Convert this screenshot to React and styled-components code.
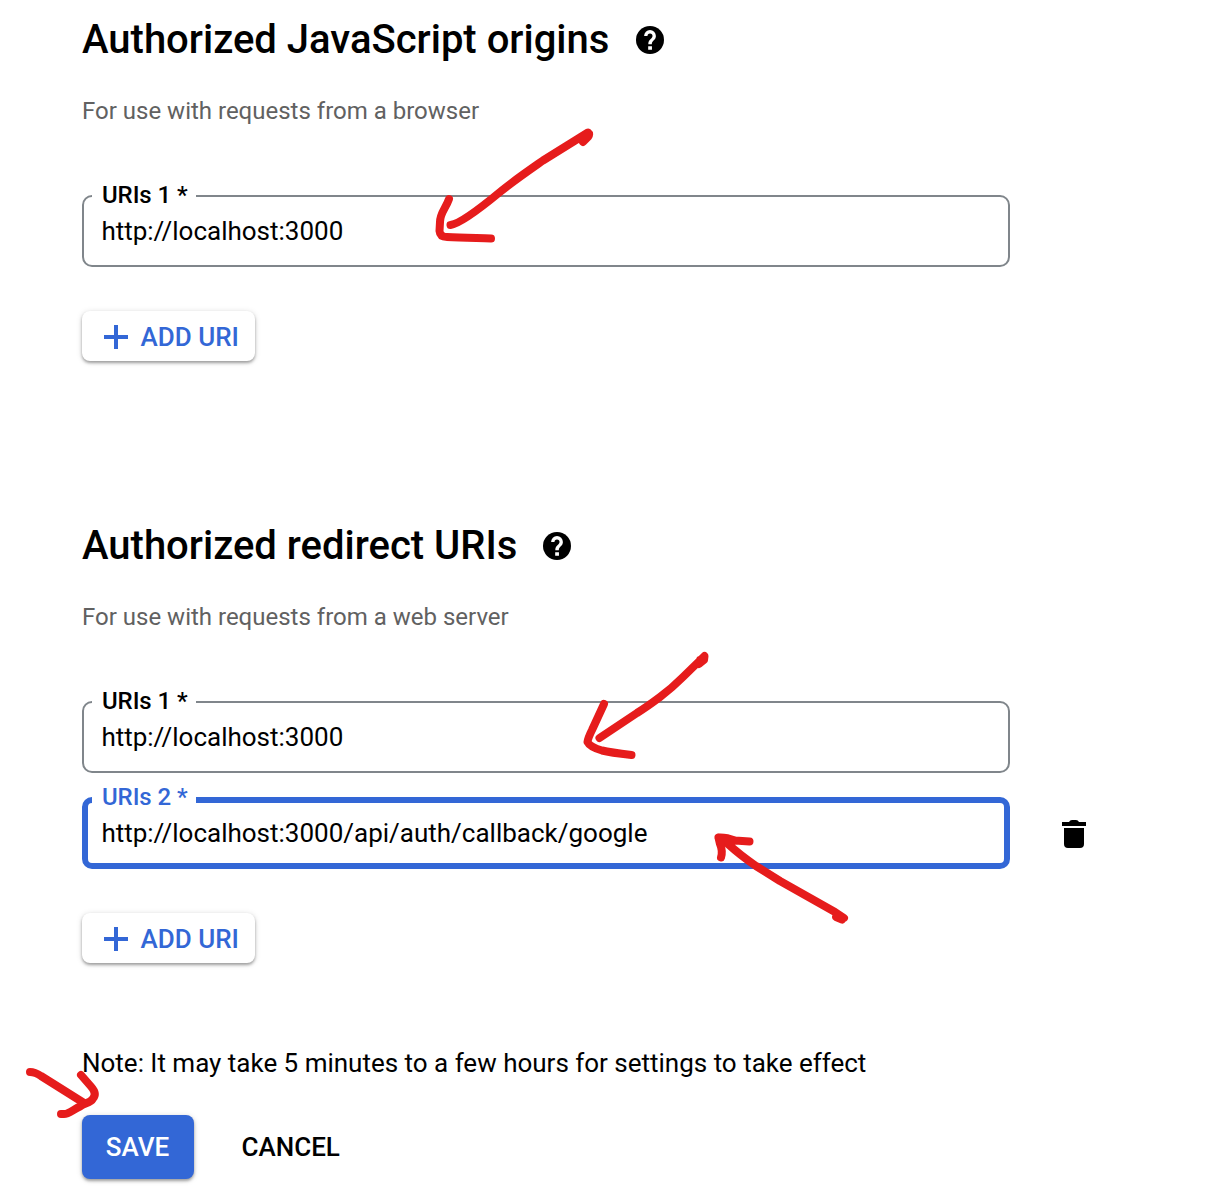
import React from "react";
import styled, { createGlobalStyle } from "styled-components";

const GlobalStyle = createGlobalStyle`
  * { box-sizing: border-box; }
  body {
    margin: 0;
    background: #fff;
    color: #000;
    font-family: Roboto, "Liberation Sans", sans-serif;
  }
`;

const Page = styled.main`
  position: relative;
  width: 1206px;
  height: 1204px;
  padding: 15px 0 0 82px;
  overflow: hidden;
`;

const Section = styled.section`
  display: flex;
  flex-direction: column;
  align-items: flex-start;
  height: ${(p) => p.$height}px;
`;

const HeadingRow = styled.div`
  display: flex;
  align-items: center;
  gap: ${(p) => p.$gap}px;
  height: 50px;
`;

const Heading = styled.h2`
  margin: 0;
  font-size: 40px;
  font-weight: 500;
  line-height: 48px;
  letter-spacing: 0;
  white-space: nowrap;
`;

const Hint = styled.p`
  margin: 30px 0 0;
  font-size: 24px;
  line-height: 32px;
  color: #616161;
  white-space: nowrap;
`;

const Fields = styled.div`
  display: flex;
  flex-direction: column;
  gap: 24px;
  margin-top: 68px;
`;

const FieldRow = styled.div`
  display: flex;
  align-items: center;
  gap: 52px;
  height: 72px;
`;

const FieldSlot = styled.div`
  display: flex;
  align-items: flex-end;
  width: 928px;
  height: 72px;
`;

const FieldBox = styled.fieldset`
  flex: none;
  width: 100%;
  height: ${(p) => (p.$focused ? 81 : 83)}px;
  margin: 0;
  padding: 0 ${(p) => (p.$focused ? 4 : 8)}px;
  border: ${(p) => (p.$focused ? "6px solid #3367d6" : "2px solid #80868b")};
  border-radius: 10px;
`;

const FieldLabel = styled.legend`
  width: 104px;
  height: 24px;
  padding: 0 0 0 10px;
  font-size: 24px;
  font-weight: 500;
  letter-spacing: -0.08px;
  line-height: ${(p) => (p.$focused ? 18 : 22)}px;
  color: ${(p) => (p.$focused ? "#3367d6" : "#000")};
  white-space: nowrap;
`;

const FieldValue = styled.div`
  padding: ${(p) => (p.$focused ? 6 : 8)}px 0 0 9.4px;
  font-size: 26px;
  line-height: 30px;
  white-space: nowrap;
`;

const IconButton = styled.button`
  display: flex;
  padding: 2px 0 0;
  border: 0;
  background: none;
`;

const AddButton = styled.button`
  display: flex;
  align-items: center;
  gap: 12.5px;
  width: 173px;
  height: 50px;
  margin-top: 44px;
  padding: 2px 0 0 22px;
  border: 0;
  border-radius: 8px;
  background: #fff;
  box-shadow: 0 2px 3px rgba(0, 0, 0, 0.32), 0 1px 6px rgba(0, 0, 0, 0.14);
  color: #3367d6;
  font: 500 26px/30px Roboto, sans-serif;
  white-space: nowrap;
`;

const Note = styled.p`
  margin: 0;
  font-size: 26px;
  line-height: 30px;
  letter-spacing: -0.008px;
  white-space: nowrap;
`;

const Actions = styled.div`
  display: flex;
  gap: 47.5px;
  margin-top: 37px;
`;

const ActionButton = styled.button`
  width: ${(p) => (p.$primary ? "112px" : "auto")};
  height: 64px;
  padding: 0 ${(p) => (p.$primary ? "1px" : "0")} 0 0;
  border: 0;
  border-radius: 8px;
  background: ${(p) => (p.$primary ? "#3367d6" : "transparent")};
  box-shadow: ${(p) =>
    p.$primary ? "0 2px 3px rgba(0, 0, 0, 0.32), 0 1px 6px rgba(0, 0, 0, 0.14)" : "none"};
  color: ${(p) => (p.$primary ? "#fff" : "#000")};
  font: 500 26px/30px Roboto, sans-serif;
  white-space: nowrap;
`;

const Markup = styled.svg`
  position: absolute;
  inset: 0;
  pointer-events: none;
`;

const HelpIcon = () => (
  <svg width="28" height="28" viewBox="2 2 20 20" aria-hidden="true">
    <circle cx="12" cy="12" r="10" fill="#000" />
    <path
      fill="#fff"
      d="M13.4 18.9h-2.7v-2.5h2.7zM15.6 11.2l-.9.92C13.8 13 13.3 13.6 13.3 15.1h-2.5v-.5c0-1.1.45-2.1 1.17-2.83l1.24-1.26c.37-.36.59-.86.59-1.41a1.8 1.8 0 0 0-3.6 0H7.8a4.2 4.2 0 0 1 8.4 0c0 .88-.36 1.68-.6 2.1z"
    />
  </svg>
);

const PlusIcon = () => (
  <svg width="24" height="24" viewBox="0 0 24 24" aria-hidden="true">
    <path d="M10 0h4v10h10v4H14v10h-4V14H0v-4h10z" fill="currentColor" />
  </svg>
);

const TrashIcon = () => (
  <svg width="24" height="28" viewBox="0 0 24 28" aria-hidden="true">
    <path d="M0 2h7q1-2 3-2h4q2 0 3 2h7v4H0zM2 8h20v16q0 4-4 4H6q-4 0-4-4z" />
  </svg>
);

const UriField = ({ label, value, focused, removable }) => (
  <FieldRow>
    <FieldSlot>
      <FieldBox $focused={focused}>
        <FieldLabel $focused={focused}>{label}</FieldLabel>
        <FieldValue $focused={focused}>{value}</FieldValue>
      </FieldBox>
    </FieldSlot>
    {removable && (
      <IconButton aria-label="Delete">
        <TrashIcon />
      </IconButton>
    )}
  </FieldRow>
);

const UriSection = ({ title, hint, fields, height, gap }) => (
  <Section $height={height}>
    <HeadingRow $gap={gap}>
      <Heading>{title}</Heading>
      <HelpIcon />
    </HeadingRow>
    <Hint>{hint}</Hint>
    <Fields>
      {fields.map((f) => (
        <UriField key={f.label} {...f} />
      ))}
    </Fields>
    <AddButton>
      <PlusIcon />
      ADD URI
    </AddButton>
  </Section>
);

const Arrows = () => (
  <Markup width="1206" height="1204" viewBox="0 0 1206 1204" aria-hidden="true">
    <g fill="none" stroke="#e61c1c" strokeWidth="8" strokeLinecap="round" strokeLinejoin="round">
      <path d="M450.500 225C459 224 477 211 500 192C512 182 528 171 543 160.500L588 132.500Q590 134 588 137L583 142L585 136" />
      <path d="M449 199C446 208 440 213 440 222L439.500 231Q440 237 447 237C462 238 477 238 491 238.500" />
      <path d="M599.500 738L637 713C645 708 652 703 660 697C668 691 676 684 683 677L704.500 656L704 660L699 664L700 660" />
      <path d="M604 704L592 730Q588 738 587.500 742Q590 747 602 750.500Q610 752.500 631.500 755" />
      <path d="M719 838L728 844Q740 855 756 866C764 871 772 876 780 881L835 912L844 918L836 917L842 919.500" />
      <path d="M721 857.500Q723 851 720 844L718.500 837.500Q726 837 735 840.500L749.500 841.500M719 838L732 842" />
      <path d="M30 1072Q35 1072 41 1076L84 1103" />
      <path d="M81 1075L91 1086.500C95 1091 96 1095 93 1098.500C90 1104 85 1102 80 1106.500C74 1109 69 1114 64 1114H61" />
    </g>
  </Markup>
);

export default function App() {
  return (
    <>
      <GlobalStyle />
      <Page>
        <UriSection
          title="Authorized JavaScript origins"
          hint="For use with requests from a browser"
          height={506}
          gap={27}
          fields={[{ label: "URIs 1 *", value: "http://localhost:3000" }]}
        />
        <UriSection
          title="Authorized redirect URIs"
          hint="For use with requests from a web server"
          height={527}
          gap={26}
          fields={[
            { label: "URIs 1 *", value: "http://localhost:3000" },
            {
              label: "URIs 2 *",
              value: "http://localhost:3000/api/auth/callback/google",
              focused: true,
              removable: true,
            },
          ]}
        />
        <Note>Note: It may take 5 minutes to a few hours for settings to take effect</Note>
        <Actions>
          <ActionButton $primary>SAVE</ActionButton>
          <ActionButton>CANCEL</ActionButton>
        </Actions>
        <Arrows />
      </Page>
    </>
  );
}
